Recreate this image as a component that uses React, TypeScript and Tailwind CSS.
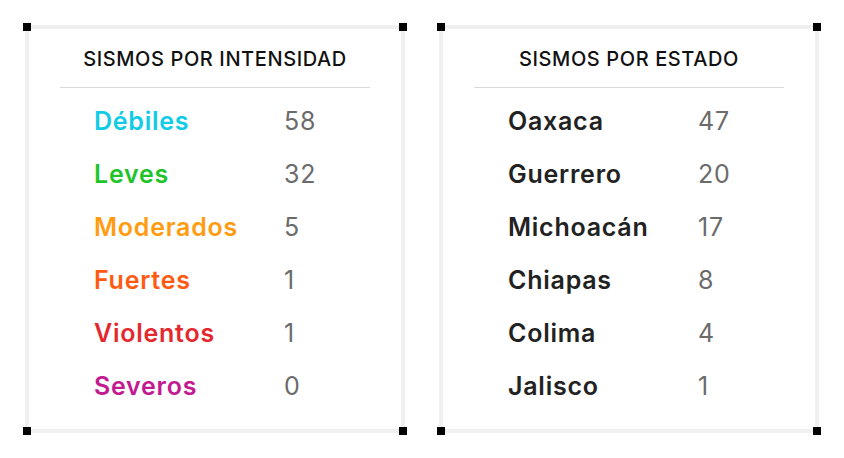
import React from "react";

type Row = { label: string; value: number; color: string };

const intensidad: Row[] = [
	{ label: "Débiles", value: 58, color: "text-[#12cbe6]" },
	{ label: "Leves", value: 32, color: "text-[#1fc42a]" },
	{ label: "Moderados", value: 5, color: "text-[#ff9c12]" },
	{ label: "Fuertes", value: 1, color: "text-[#ff5a12]" },
	{ label: "Violentos", value: 1, color: "text-[#e3292e]" },
	{ label: "Severos", value: 0, color: "text-[#c21a90]" },
];

const estado: Row[] = [
	{ label: "Oaxaca", value: 47, color: "text-[#222222]" },
	{ label: "Guerrero", value: 20, color: "text-[#222222]" },
	{ label: "Michoacán", value: 17, color: "text-[#222222]" },
	{ label: "Chiapas", value: 8, color: "text-[#222222]" },
	{ label: "Colima", value: 4, color: "text-[#222222]" },
	{ label: "Jalisco", value: 1, color: "text-[#222222]" },
];

const Corner = ({ pos }: { pos: string }) => (
	<span className={`absolute w-2 h-2 bg-black ${pos}`} />
);

const Card = ({ title, rows }: { title: string; rows: Row[] }) => {
	return (
		<div className="relative w-[380px] h-[408px] border-4 border-[#f0f0f0] bg-white">
			<Corner pos="-top-[6px] -left-[6px]" />
			<Corner pos="-top-[6px] -right-[6px]" />
			<Corner pos="-bottom-[6px] -left-[6px]" />
			<Corner pos="-bottom-[6px] -right-[6px]" />
			<h2 className="pt-[18px] text-center text-[20px] leading-6 font-medium text-[#111] tracking-[0.03em]">
				{title}
			</h2>
			<div className="mx-[31px] mt-4 h-px bg-[#d9d9d9]"></div>
			<div className="mt-[7px] pl-[65px] grid grid-cols-[190px_1fr]">
				{rows.map((r) => (
					<React.Fragment key={r.label}>
						<span className={`text-[25px] leading-[53px] font-semibold tracking-[0.03em] ${r.color}`}>
							{r.label}
						</span>
						<span className="text-[25px] leading-[53px] tracking-[0.03em] text-[#6b6b6b]">
							{r.value}
						</span>
					</React.Fragment>
				))}
			</div>
		</div>
	);
};

export default function App() {
	return (
		<div
			className="w-[844px] h-[458px] bg-white flex gap-[34px] pl-[25px] pt-[25px]"
			style={{ fontFamily: "Inter, 'Noto Sans', sans-serif" }}
		>
			<Card title="SISMOS POR INTENSIDAD" rows={intensidad} />
			<Card title="SISMOS POR ESTADO" rows={estado} />
		</div>
	);
}
